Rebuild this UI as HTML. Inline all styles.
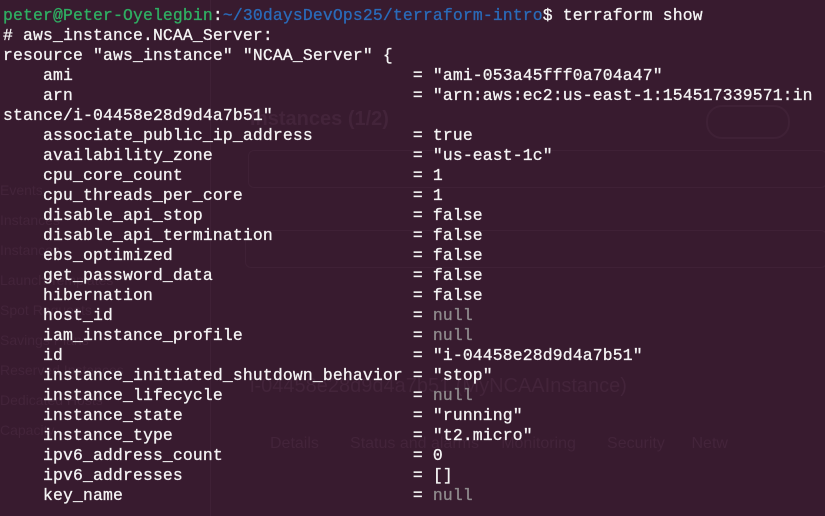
<!DOCTYPE html>
<html><head><meta charset="utf-8"><style>
html,body{margin:0;padding:0;width:825px;height:516px;overflow:hidden;background:#381b2f;}
.g{position:absolute;font-family:"Liberation Sans",sans-serif;color:#43243a;}
pre{position:absolute;left:3px;top:6px;margin:0;font-family:"Liberation Mono",monospace;font-size:16.4px;line-height:20px;color:#f4f4f4;letter-spacing:0.16px;-webkit-text-stroke:0.3px #f4f4f4;}
.gr{color:#2fae62;-webkit-text-stroke:0.3px #2fae62}.bl{color:#2a6ab8;-webkit-text-stroke:0.3px #2a6ab8}.nu{color:#8e8a8c;-webkit-text-stroke:0.3px #8e8a8c}
</style></head><body>
<div style="position:absolute;left:210px;top:0;width:1px;height:516px;background:#3f2136"></div>
<div style="position:absolute;left:248px;top:150px;width:577px;height:36px;border:1px solid #3f2136;border-radius:6px"></div>
<div style="position:absolute;left:245px;top:230px;width:580px;height:36px;border:1px solid #3f2136;border-radius:6px"></div>
<div style="position:absolute;left:706px;top:105px;width:80px;height:30px;border:2px solid #3f2136;border-radius:16px"></div>
<div class="g" style="left:250px;top:108px;font-size:20px;font-weight:bold">Instances (1/2)</div>
<div class="g" style="left:250px;top:375px;font-size:20px">i-04458e28d9d4a7b51 (MyNCAAInstance)</div>
<div class="g" style="left:270px;top:435px;font-size:16px">Details &nbsp;&nbsp;&nbsp;&nbsp;&nbsp; Status and alarms &nbsp;&nbsp;&nbsp; Monitoring &nbsp;&nbsp;&nbsp;&nbsp;&nbsp; Security &nbsp;&nbsp;&nbsp;&nbsp; Netw</div>
<div class="g" style="left:0;top:175px;font-size:14px;line-height:30px">Events<br>Instances<br>Instances<br>Launch Templates<br>Spot Requests<br>Savings Plans<br>Reserved Instances<br>Dedicated Hosts<br>Capacity</div>
<pre><span class="gr">peter@Peter-Oyelegbin</span>:<span class="bl">~/30daysDevOps25/terraform-intro</span>$ terraform show
# aws_instance.NCAA_Server:
resource "aws_instance" "NCAA_Server" {
    ami                                  = "ami-053a45fff0a704a47"
    arn                                  = "arn:aws:ec2:us-east-1:154517339571:in
stance/i-04458e28d9d4a7b51"
    associate_public_ip_address          = true
    availability_zone                    = "us-east-1c"
    cpu_core_count                       = 1
    cpu_threads_per_core                 = 1
    disable_api_stop                     = false
    disable_api_termination              = false
    ebs_optimized                        = false
    get_password_data                    = false
    hibernation                          = false
    host_id                              = <span class="nu">null</span>
    iam_instance_profile                 = <span class="nu">null</span>
    id                                   = "i-04458e28d9d4a7b51"
    instance_initiated_shutdown_behavior = "stop"
    instance_lifecycle                   = <span class="nu">null</span>
    instance_state                       = "running"
    instance_type                        = "t2.micro"
    ipv6_address_count                   = 0
    ipv6_addresses                       = []
    key_name                             = <span class="nu">null</span></pre>
</body></html>
